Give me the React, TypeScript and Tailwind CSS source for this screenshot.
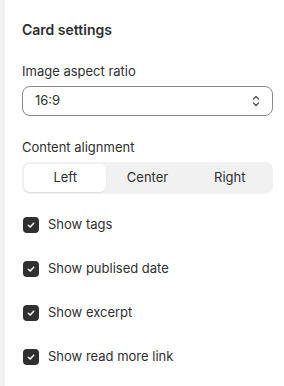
import React, { useState } from 'react';

const options = ['Left', 'Center', 'Right'];
const toggles = ['Show tags', 'Show publised date', 'Show excerpt', 'Show read more link'];

const Checkbox = ({ checked }: { checked: boolean }) => (
  <span className={`w-4 h-4 rounded-[4px] flex items-center justify-center shrink-0 ${checked ? 'bg-[#303030]' : 'border border-[#8a8a8a] bg-white'}`}>
    {checked && (
      <svg width="10" height="10" viewBox="0 0 10 10" fill="none">
        <path d="M2.3 5.2 4.2 7 7.7 3.2" stroke="white" strokeWidth="1.5" strokeLinecap="round" strokeLinejoin="round" />
      </svg>
    )}
  </span>
);

export default function App() {
  const [align, setAlign] = useState('Left');
  const [checks, setChecks] = useState(toggles.map(() => true));

  return (
    <div className="w-[284px] h-[386px] bg-white flex font-['Inter',sans-serif] text-[#303030] overflow-hidden">
      <div className="w-[5px] bg-[#f1f1f1] shrink-0" />
      <div className="flex-1 pl-[17px] pr-[11px] pt-5">
        <h2 className="text-[14px] leading-5 font-semibold">Card settings</h2>

        <p className="mt-[21px] text-[13px] leading-5">Image aspect ratio</p>
        <div className="mt-[5px] h-[30px] rounded-lg border border-[#8a8a8a] flex items-center justify-between pl-3 pr-[10px]">
          <span className="text-[13px]">16:9</span>
          <svg width="12" height="14" viewBox="0 0 12 14" fill="none">
            <path d="M3.5 5 6 2.5 8.5 5M3.5 9 6 11.5 8.5 9" stroke="#4a4a4a" strokeWidth="1.2" strokeLinecap="round" strokeLinejoin="round" />
          </svg>
        </div>

        <p className="mt-[21px] text-[13px] leading-5">Content alignment</p>
        <div className="mt-[5px] h-8 rounded-lg bg-[#f1f1f1] p-[2px] grid grid-cols-3">
          {options.map((o) => (
            <button
              key={o}
              onClick={() => setAlign(o)}
              className={`rounded-md text-[13px] ${align === o ? 'bg-white shadow-[0_1px_1px_rgba(0,0,0,0.08)]' : ''}`}
            >
              {o}
            </button>
          ))}
        </div>

        <div className="mt-[21px] flex flex-col gap-6">
          {toggles.map((t, i) => (
            <label
              key={t}
              className="flex items-center gap-[9px] h-5 pl-px cursor-pointer"
              onClick={() => setChecks(checks.map((c, j) => (j === i ? !c : c)))}
            >
              <Checkbox checked={checks[i]} />
              <span className="text-[13px]">{t}</span>
            </label>
          ))}
        </div>
      </div>
    </div>
  );
}
